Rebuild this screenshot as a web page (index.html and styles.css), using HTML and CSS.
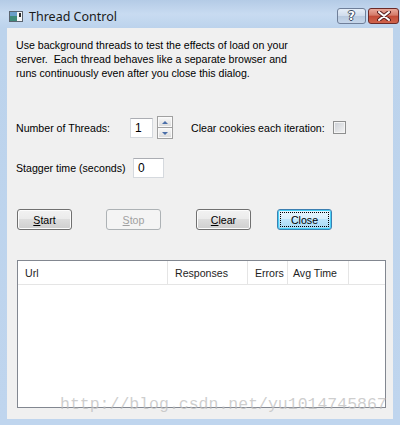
FILE: index.html
```html
<!DOCTYPE html>
<html lang="en">
<head>
    <meta charset="UTF-8">
    <title>Thread Control</title>
    <link rel="stylesheet" href="styles.css">
</head>
<body>
    <div class="window">
        <div class="titlebar">
            <svg class="app-icon" width="14" height="11" viewBox="0 0 14 11">
                <rect x="0.5" y="0.5" width="13" height="10" fill="#f4f6f8" stroke="#5a6470"/>
                <rect x="1" y="1" width="7" height="9" fill="#3f8a7a"/>
                <rect x="1" y="1" width="7" height="4" fill="#6a9ec8"/>
                <rect x="10" y="2" width="2" height="4" fill="#2a2a2a"/>
            </svg>
            <span class="title">Thread Control</span>
            <div class="caption-buttons">
                <div class="cap-btn help">?</div>
                <div class="cap-btn close">
                    <svg width="14" height="10" viewBox="0 0 14 10">
                        <path d="M2 1 L12 9 M12 1 L2 9" stroke="#5a2020" stroke-width="4" stroke-linecap="round"/>
                        <path d="M2 1 L12 9 M12 1 L2 9" stroke="#ffffff" stroke-width="2" stroke-linecap="round"/>
                    </svg>
                </div>
            </div>
        </div>

        <div class="client">
            <p class="intro">Use background threads to test the effects of load on your<br>server.&nbsp; Each thread behaves like a separate browser and<br>runs continuously even after you close this dialog.</p>

            <div class="row row-threads">
                <span class="label label-threads">Number of Threads:</span>
                <div class="textbox tb-threads">1</div>
                <div class="spinner">
                    <div class="spin up"><span class="tri tri-up"></span></div>
                    <div class="spin down"><span class="tri tri-down"></span></div>
                </div>
                <span class="label label-cookies">Clear cookies each iteration:</span>
                <div class="checkbox"></div>
            </div>

            <div class="row row-stagger">
                <span class="label label-stagger">Stagger time (seconds)</span>
                <div class="textbox tb-stagger">0</div>
            </div>

            <div class="buttons">
                <div class="btn btn-start"><u>S</u>tart</div>
                <div class="btn btn-stop disabled"><u>S</u>top</div>
                <div class="btn btn-clear"><u>C</u>lear</div>
                <div class="btn btn-close default"><span class="focus">Close</span></div>
            </div>

            <div class="listview">
                <div class="list-header">
                    <div class="col col-url">Url</div>
                    <div class="col col-resp">Responses</div>
                    <div class="col col-err">Errors</div>
                    <div class="col col-avg">Avg Time</div>
                    <div class="col col-rest"></div>
                </div>
                <div class="list-body"></div>
            </div>
        </div>

        <div class="watermark">http://blog.csdn.net/yu1014745867</div>
    </div>
</body>
</html>
```

FILE: styles.css
```css
* {
    margin: 0;
    padding: 0;
    box-sizing: border-box;
}

body {
    background: #bfd5ee;
    font-family: 'Liberation Sans', Arial, sans-serif;
    font-size: 10.6px;
    color: #000;
}

.window {
    position: relative;
    width: 400px;
    height: 425px;
    padding: 0 7px 6px;
    background: linear-gradient(180deg, #b4cbe6 0px, #c8dbf1 14px, #bcd3ec 28px, #bfd5ee 100%);
}

.titlebar {
    height: 28px;
    display: flex;
    align-items: center;
    padding-left: 2px;
}

.app-icon {
    margin-top: 4px;
}

.title {
    font-family: 'Noto Sans', 'Open Sans', sans-serif;
    font-size: 12.5px;
    margin-left: 6px;
    margin-top: 4px;
    color: #1a1a1a;
}

.caption-buttons {
    margin-left: auto;
    margin-right: -6px;
    margin-top: 4px;
    display: flex;
    gap: 2px;
}

.cap-btn {
    height: 16px;
    border-radius: 3px;
    display: flex;
    align-items: center;
    justify-content: center;
}

.help {
    width: 29px;
    border: 1px solid #6f7f99;
    background: linear-gradient(180deg, #e6eef8 0%, #cfdcec 50%, #b8cadf 51%, #c6d6ea 100%);
    color: #fff;
    font-family: 'DejaVu Sans', sans-serif;
    font-weight: bold;
    font-size: 12px;
    text-shadow: 1px 0 #3a4a60, -1px 0 #3a4a60, 0 1px #3a4a60, 0 -1px #3a4a60;
}

.close {
    width: 31px;
    border: 1px solid #6b2a28;
    background: linear-gradient(180deg, #e9a99b 0%, #d47a68 45%, #c24a36 50%, #d0644c 100%);
}

.client {
    height: 391px;
    background: #f0f0f0;
}

.intro {
    padding: 10px 0 0 9px;
    line-height: 14px;
}

.row {
    display: flex;
    align-items: center;
}

.row-threads {
    margin-top: 36px;
    height: 23px;
}

.row-stagger {
    margin-top: 19px;
    height: 20px;
}

.label-threads {
    margin-left: 9px;
    width: 114px;
}

.label-stagger {
    margin-left: 9px;
    width: 117px;
}

.label-cookies {
    margin-left: 18px;
    width: 142px;
    white-space: nowrap;
}

.textbox {
    background: #fff;
    border: 1px solid #d5d9de;
    border-top-color: #abadb3;
    height: 20px;
    padding: 2px 0 0 4px;
    font-size: 12px;
    line-height: 14px;
}

.tb-threads {
    width: 23px;
}

.tb-stagger {
    width: 31px;
}

.spinner {
    margin-left: 4px;
    width: 16px;
    height: 23px;
    border: 1px solid #a0a0a0;
    display: flex;
    flex-direction: column;
    background: #a0a0a0;
    gap: 1px;
}

.spin {
    flex: 1;
    background: linear-gradient(180deg, #f6f6f6, #dcdcdc);
    border: 1px solid #fafafa;
    display: flex;
    align-items: center;
    justify-content: center;
}

.tri {
    width: 0;
    height: 0;
    border-left: 3px solid transparent;
    border-right: 3px solid transparent;
}

.tri-up {
    border-bottom: 3px solid #4a6ea8;
}

.tri-down {
    border-top: 3px solid #4a6ea8;
}

.checkbox {
    width: 13px;
    height: 13px;
    border: 1px solid #8e8f8f;
    background: linear-gradient(135deg, #cbcfd5 0%, #f4f4f4 100%);
    box-shadow: inset 0 0 0 1px #f4f4f4;
}

.buttons {
    display: flex;
    margin-top: 31px;
}

.btn {
    width: 55px;
    height: 21px;
    border: 1px solid #707070;
    border-radius: 3px;
    background: linear-gradient(180deg, #f2f2f2 0%, #ebebeb 48%, #dddddd 50%, #cfcfcf 100%);
    display: flex;
    align-items: center;
    justify-content: center;
    box-shadow: inset 0 0 0 1px #fcfcfc;
}

.btn-start {
    margin-left: 10px;
}

.btn-stop {
    margin-left: 34px;
}

.btn-clear {
    margin-left: 35px;
}

.btn-close {
    margin-left: 26px;
}

.disabled {
    border-color: #adb2b5;
    background: #f4f4f4;
    color: #a0a0a0;
    box-shadow: none;
}

.default {
    border-color: #3c7fb1;
    background: linear-gradient(180deg, #eaf6fd 0%, #d9f0fc 48%, #bee6fd 50%, #a7d9f5 100%);
    box-shadow: inset 0 0 0 1px #48d0f6;
}

.focus {
    display: flex;
    align-items: center;
    justify-content: center;
    width: 49px;
    height: 15px;
    border: 1px dotted #000;
}

.listview {
    margin: 30px 0 0 10px;
    width: 369px;
    height: 148px;
    border: 1px solid #828790;
    background: #fff;
}

.list-header {
    display: grid;
    grid-template-columns: 150px 80px 40px 61px 1fr;
    height: 24px;
    border-bottom: 1px solid #e5e5e5;
}

.col {
    display: flex;
    align-items: center;
    border-right: 1px solid #e5e5e5;
    padding-left: 7px;
    color: #1e1e1e;
}

.col-resp,
.col-err {
    padding-left: 7px;
}

.col-avg {
    padding-left: 5px;
}

.col-rest {
    border-right: none;
}

.watermark {
    position: absolute;
    left: 60px;
    top: 395px;
    font-family: 'Liberation Mono', 'Courier New', monospace;
    font-size: 16.5px;
    color: rgba(190, 190, 190, 0.75);
    white-space: nowrap;
}
```
